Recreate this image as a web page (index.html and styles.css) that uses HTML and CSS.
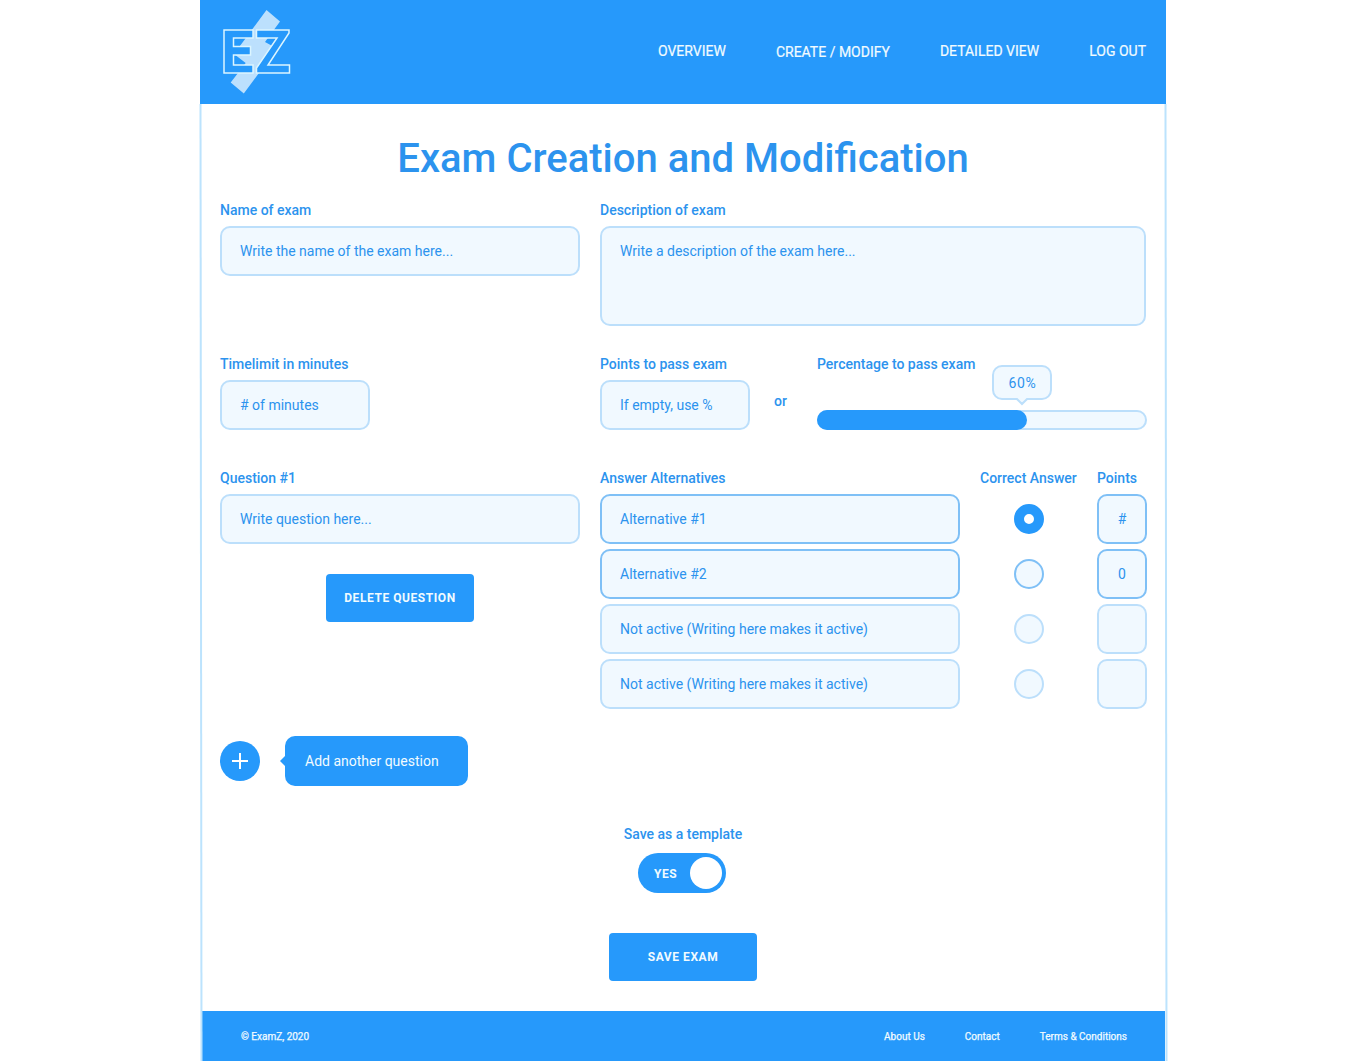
FILE: index.html
```html
<!DOCTYPE html>
<html lang="en">
<head>
<meta charset="utf-8">
<title>ExamZ - Exam Creation and Modification</title>
<link rel="stylesheet" href="styles.css">
</head>
<body>
<div class="page">
  <header class="header">
    <svg class="logo" width="74" height="92" viewBox="0 0 74 92" role="img" aria-label="EZ">
      <path class="bolt" d="M46.500 5 L60 16.500 L45 37 L57 43.500 L23.800 88.500 L10.700 77.500 L25.700 58 L14 49 Z"/>
      <path class="letter" d="M4 25H33V33H13.500V41.500H30.500V50H13.500V60H33V68H4Z"/>
      <path class="letter" d="M36.500 25H69V28L48 60H69.500V68H36.500V63L57 33H36.500Z"/>
    </svg>
    <nav class="nav">
      <a>OVERVIEW</a>
      <a class="current">CREATE / MODIFY</a>
      <a>DETAILED VIEW</a>
      <a>LOG OUT</a>
    </nav>
  </header>

  <main class="main">
    <h1 class="title">Exam Creation and Modification</h1>

    <section class="row details">
      <div class="col-left">
        <div class="label">Name of exam</div>
        <div class="field">Write the name of the exam here...</div>
      </div>
      <div class="col-right">
        <div class="label">Description of exam</div>
        <div class="field area">Write a description of the exam here...</div>
      </div>
    </section>

    <section class="row limits">
      <div class="col-left">
        <div class="label">Timelimit in minutes</div>
        <div class="field short"># of minutes</div>
      </div>
      <div class="col-right pass">
        <div class="points-pass">
          <div class="label">Points to pass exam</div>
          <div class="field short">If empty, use %</div>
        </div>
        <div class="or">or</div>
        <div class="percent">
          <div class="label">Percentage to pass exam</div>
          <div class="track">
            <div class="fill" style="width:210px"></div>
            <div class="bubble">60%
              <svg class="tip" width="14" height="8" viewBox="0 0 14 8"><path class="tip-fill" d="M1 0H13V2L7 6.500L1 2Z"/><path class="tip-line" d="M0 1H2L7 6L12 1H14"/></svg>
            </div>
          </div>
        </div>
      </div>
    </section>

    <section class="row question">
      <div class="col-left">
        <div class="label">Question #1</div>
        <div class="field">Write question here...</div>
        <button class="button delete">DELETE QUESTION</button>
      </div>
      <div class="answers">
        <div class="label">Answer Alternatives</div>
        <div class="label">Correct Answer</div>
        <div class="label">Points</div>

        <div class="field active">Alternative #1</div>
        <div class="radio checked"></div>
        <div class="field points active">#</div>

        <div class="field active">Alternative #2</div>
        <div class="radio active"></div>
        <div class="field points active">0</div>

        <div class="field">Not active (Writing here makes it active)</div>
        <div class="radio"></div>
        <div class="field points"></div>

        <div class="field">Not active (Writing here makes it active)</div>
        <div class="radio"></div>
        <div class="field points"></div>
      </div>
    </section>

    <section class="add">
      <div class="plus"><svg width="16" height="16" viewBox="0 0 16 16"><path d="M8 0V16M0 8H16"/></svg></div>
      <div class="add-hint">Add another question</div>
    </section>

    <section class="save">
      <div class="label">Save as a template</div>
      <div class="toggle"><span>YES</span><i class="knob"></i></div>
      <button class="button">SAVE EXAM</button>
    </section>
  </main>

  <footer class="footer">
    <span>© ExamZ, 2020</span>
    <a class="push">About Us</a>
    <a>Contact</a>
    <a>Terms &amp; Conditions</a>
  </footer>
</div>
</body>
</html>
```
FILE: styles.css
```css
* {
  box-sizing: border-box;
}

body {
  margin: 0;
  background: #fff;
  color: #2c93ee;
  font: 14px/16px Roboto, "Liberation Sans", sans-serif;
}

.page {
  position: relative;
  width: 966px;
  height: 1061px;
  margin: 0 auto;
  display: flex;
  flex-direction: column;
}

/* Side rules drift right by one pixel over the page height. */
.page::before,
.page::after {
  content: "";
  position: absolute;
  top: 104px;
  bottom: 0;
  width: 2px;
  background: #bce3fd;
  transform: skewX(0.06deg);
}

.page::before {
  left: -0.5px;
}

.page::after {
  right: -0.5px;
}

.header {
  height: 104px;
  flex: none;
  display: flex;
  justify-content: space-between;
  padding: 5px 20px 0;
  background: #2699fb;
}

.bolt {
  fill: #bce0fd;
}

.letter {
  fill: #2699fb;
  stroke: #dcf5ff;
  stroke-width: 1.5;
}

.nav {
  display: flex;
  gap: 50px;
  padding-top: 38px;
  color: #f1fbff;
  -webkit-text-stroke: 0.2px #f1fbff;
}

.nav .current {
  padding-top: 1px;
}

.title {
  margin: 0 0 21px;
  font-size: 40px;
  line-height: 52px;
  font-weight: 500;
  text-align: center;
  white-space: nowrap;
}

.main {
  flex: 1;
  padding: 29px 20px 0;
}

.row {
  display: flex;
  gap: 20px;
}

.details {
  margin-top: -4px;
}

.col-left {
  width: 360px;
  flex: none;
}

.col-right {
  width: 546px;
  flex: none;
}

.label {
  height: 24px;
  font-weight: 500;
  white-space: nowrap;
}

.field {
  height: 50px;
  padding: 15px 18px;
  border: 2px solid #bcdffb;
  border-radius: 10px;
  background: #f1f9ff;
  white-space: nowrap;
}

.field.active {
  border-color: #7fc0f6;
}

.field.area {
  height: 100px;
}

.field.short {
  width: 150px;
}

.field.points {
  width: 50px;
  padding: 15px 0;
  text-align: center;
}

.limits {
  margin-top: 30px;
}

.pass {
  display: flex;
}

.or {
  width: 67px;
  flex: none;
  padding: 37px 0 0 24px;
  font-weight: 500;
}

.percent {
  width: 330px;
  flex: none;
}

.track {
  position: relative;
  width: 330px;
  height: 20px;
  margin-top: 30px;
  border-radius: 10px;
  background: #f1f9ff;
  box-shadow: inset 0 0 0 2px #bcdffb;
}

.fill {
  height: 20px;
  border-radius: 10px;
  background: #2699fb;
}

.bubble {
  position: absolute;
  left: 175px;
  top: -45px;
  width: 60px;
  height: 35px;
  padding: 8px 0 0 1px;
  border: 2px solid #bcdffb;
  border-radius: 10px;
  background: #f1f9ff;
  text-align: center;
  letter-spacing: 0.7px;
}

.tip {
  position: absolute;
  left: 21px;
  top: 31px;
}

.tip-fill {
  fill: #f1f9ff;
}

.tip-line {
  fill: none;
  stroke: #bcdffb;
  stroke-width: 2;
}

.question {
  margin-top: 40px;
}

.answers {
  display: grid;
  grid-template-columns: 360px 97px 50px;
  grid-template-rows: 19px repeat(4, 50px);
  gap: 5px 20px;
}

.radio {
  width: 30px;
  height: 30px;
  align-self: center;
  justify-self: center;
  border: 2px solid #bcdffb;
  border-radius: 50%;
  background: #f1f9ff;
}

.radio.active {
  border-color: #7fc0f6;
}

.radio.checked {
  border: 10px solid #2699fb;
  background: #fff;
}

.button {
  display: block;
  width: 148px;
  height: 48px;
  padding: 0;
  border: 0;
  border-radius: 4px;
  background: #2699fb;
  color: #f1fbff;
  font: bold 12px/16px Roboto, "Liberation Sans", sans-serif;
  letter-spacing: 0.56px;
}

.delete {
  margin: 30px 0 0 106px;
}

.add {
  display: flex;
  align-items: center;
  height: 50px;
  margin-top: 27px;
}

.plus {
  width: 40px;
  height: 40px;
  display: grid;
  place-items: center;
  border-radius: 50%;
  background: #2699fb;
}

.plus path {
  stroke: #fff;
  stroke-width: 2;
}

.add-hint {
  position: relative;
  width: 183px;
  height: 50px;
  margin-left: 25px;
  padding: 17px 20px;
  border-radius: 10px;
  background: #2699fb;
  color: #f1fbff;
  white-space: nowrap;
}

.add-hint::before {
  content: "";
  position: absolute;
  left: -5px;
  top: 20px;
  border: solid transparent;
  border-width: 5px 5px 5px 0;
  border-right-color: #2699fb;
}

.save {
  display: flex;
  flex-direction: column;
  align-items: center;
  margin-top: 40px;
}

.save .label {
  height: 27px;
}

.toggle {
  width: 88px;
  height: 40px;
  display: flex;
  align-items: center;
  justify-content: space-between;
  margin: 0 2px 40px 0;
  padding: 0 4px 0 16px;
  border-radius: 20px;
  background: #2699fb;
  color: #f1fbff;
  font-size: 12px;
  font-weight: 700;
  letter-spacing: 0.5px;
}

.toggle span {
  padding-top: 2px;
}

.knob {
  width: 32px;
  height: 32px;
  border-radius: 50%;
  background: #fff;
}

.footer {
  height: 50px;
  flex: none;
  display: flex;
  gap: 40px;
  margin: 0 1px 0 2px;
  padding: 18px 38px 0 39px;
  background: #2699fb;
  color: #f1fbff;
  font-size: 10px;
  -webkit-text-stroke: 0.25px #f1fbff;
}

.push {
  margin-left: auto;
}
```
